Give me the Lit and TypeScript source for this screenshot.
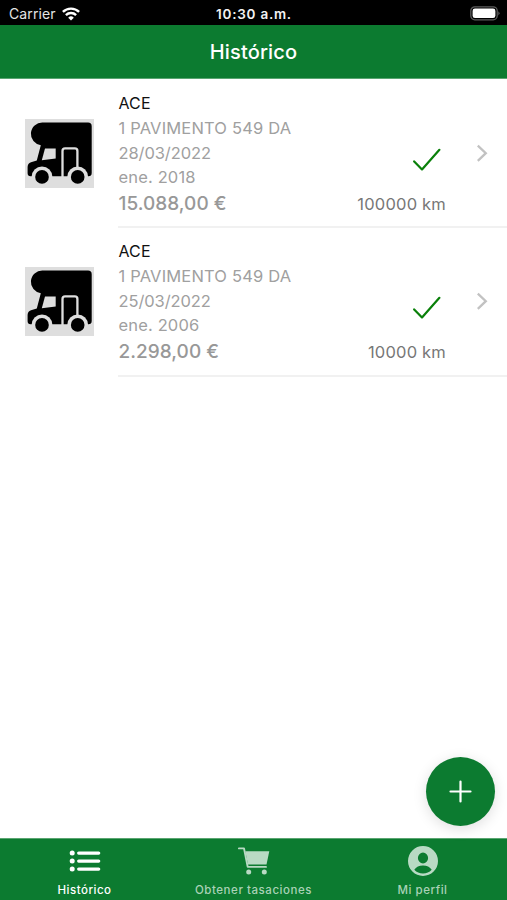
import { LitElement, html, css, svg } from "lit";
import { customElement, property } from "lit/decorators.js";

interface Valuation {
  brand: string;
  model: string;
  date: string;
  registered: string;
  price: string;
  distance: string;
}

const VALUATIONS: Valuation[] = [
  { brand: "ACE", model: "1 PAVIMENTO 549 DA", date: "28/03/2022", registered: "ene. 2018", price: "15.088,00 €", distance: "100000 km" },
  { brand: "ACE", model: "1 PAVIMENTO 549 DA", date: "25/03/2022", registered: "ene. 2006", price: "2.298,00 €", distance: "10000 km" },
];

@customElement("status-bar")
class StatusBar extends LitElement {
  static styles = css`
    :host { display: grid; grid-template-columns: 1fr auto 1fr; align-items: center; height: 25px; padding: 2px 7px 0 9px; box-sizing: border-box; background: #000; color: #e4e4e4; font-size: 14px; }
    .carrier { display: flex; align-items: center; gap: 6px; letter-spacing: 0.12px; }
    .time { color: #f2f2f2; font-size: 13.5px; font-weight: 600; letter-spacing: 0.75px; margin-right: 1px; }
    .battery { justify-self: end; display: block; }
    svg { display: block; }
  `;
  render() {
    return html`
      <div class="carrier">
        <span>Carrier</span>
        <svg width="18" height="14" viewBox="0 0 18 14" fill="none" stroke="#fff" stroke-width="2.4">
          <path d="M.9 4.9a11.6 11.6 0 0 1 16.2 0" />
          <path d="M3.9 8.1a7.3 7.3 0 0 1 10.2 0" />
          <path d="M9 13.6 6.2 10.7a4 4 0 0 1 5.6 0Z" fill="#fff" stroke="none" />
        </svg>
      </div>
      <div class="time">10:30 a.m.</div>
      <svg class="battery" width="30" height="15" viewBox="0 0 30 15">
        <rect x=".8" y=".8" width="26.4" height="13" rx="4" fill="none" stroke="#5c5c5c" stroke-width="1.3" />
        <rect x="2.6" y="2.5" width="22.8" height="9.6" rx="2.4" fill="#fff" />
        <path d="M28.3 5.2q2.6 2.1 0 4.2z" fill="#5c5c5c" />
      </svg>
    `;
  }
}

@customElement("camper-thumb")
class CamperThumb extends LitElement {
  static styles = css`
    :host { display: block; width: 69px; height: 69px; background: #dedede; }
    svg { display: block; }
    .gap { fill: #dedede; }
    .door { fill: none; stroke: #dedede; stroke-width: 2.3; }
  `;
  render() {
    return html`
      <svg width="69" height="69" viewBox="0 0 69 69">
        <path d="M17.5 3.5H63a3.7 3.7 0 0 1 3.7 3.7V54q0 3.3-3.3 3.3H5.6q-3 0-3-3V48q0-3.6 3.4-4.8L11.8 41.4 15.8 26.2A11.4 11.4 0 0 1 17.5 3.5Z" />
        <path class="gap" d="M20 29.4h10.7v10L16.8 41.3Z" />
        <path class="door" d="M37.5 58V32q0-2.6 2.6-2.6h9.7q2.6 0 2.6 2.6V49" />
        <circle class="gap" cx="17" cy="57.9" r="10.4" />
        <circle class="gap" cx="52.7" cy="57.9" r="10.4" />
        <circle cx="17" cy="57.9" r="6.8" />
        <circle cx="52.7" cy="57.9" r="6.8" />
      </svg>
    `;
  }
}

@customElement("valuation-row")
class ValuationRow extends LitElement {
  @property({ attribute: false }) item!: Valuation;
  static styles = css`
    :host { display: flex; align-items: center; gap: 24px; height: 148.3px; padding-left: 25px; }
    .body { flex: 1; height: 100%; box-sizing: border-box; display: flex; padding-top: 12px; box-shadow: 0 1px 0 #f1f1f1, inset 0 -1px 0 #f1f1f1; }
    .facts { flex: 1; padding-left: 0.5px; font-size: 16.5px; line-height: 24.6px; color: #a0a0a0; }
    .brand { color: #111; font-size: 16px; line-height: 25px; letter-spacing: 0.1px; }
    .model { letter-spacing: 0.17px; }
    .date { letter-spacing: -0.1px; }
    .registered { letter-spacing: 0.15px; }
    .price { font-size: 19px; line-height: 27px; color: #989898; font-weight: 450; letter-spacing: 0.03px; }
    .side { display: flex; flex-direction: column; align-items: flex-end; padding-top: 57px; }
    .check { display: block; margin-right: 5px; }
    .distance { margin-top: 20px; font-size: 16.5px; line-height: 24px; letter-spacing: 0.2px; color: #777; }
    .chevron { display: block; margin: 53px 19px 0 30px; }
  `;
  render() {
    const v = this.item;
    return html`
      <camper-thumb></camper-thumb>
      <div class="body">
        <div class="facts">
          <div class="brand">${v.brand}</div>
          <div class="model">${v.model}</div>
          <div class="date">${v.date}</div>
          <div class="registered">${v.registered}</div>
          <div class="price">${v.price}</div>
        </div>
        <div class="side">
          <svg class="check" width="28" height="24" viewBox="0 0 28 24" fill="none" stroke="#0a800a" stroke-width="2.2" stroke-linecap="round" stroke-linejoin="round">
            <path d="M1.2 13.4 9 21.4 26.4 1.8" />
          </svg>
          <div class="distance">${v.distance}</div>
        </div>
        <svg class="chevron" width="12" height="18" viewBox="0 0 12 18" fill="none" stroke="#c2c2c2" stroke-width="2.3">
          <path d="M1.8 1.6 9.8 9.2 1.8 16.8" />
        </svg>
      </div>
    `;
  }
}

const TABS = [
  {
    label: "Histórico",
    icon: svg`<g stroke="currentColor" stroke-width="3.3" stroke-linecap="round"><path d="M9.7 7.1h20M9.7 15.1h20M9.7 23.1h20"/></g><g fill="currentColor"><circle cx="3.2" cy="7.1" r="2.5"/><circle cx="3.2" cy="15.1" r="2.5"/><circle cx="3.2" cy="23.1" r="2.5"/></g>`,
  },
  {
    label: "Obtener tasaciones",
    icon: svg`<path d="M.9 2.4H6L9.7 20.9H28" fill="none" stroke="currentColor" stroke-width="1.9" stroke-linejoin="round" stroke-linecap="round"/><path d="M7.3 5.2H31.3L28.5 18.6H10Z" fill="currentColor"/><circle cx="10.7" cy="26.1" r="2.5" fill="currentColor"/><circle cx="26.3" cy="26.1" r="2.5" fill="currentColor"/>`,
  },
  {
    label: "Mi perfil",
    icon: svg`<path fill="currentColor" fill-rule="evenodd" d="M16 0a15 15 0 1 0 0 30 15 15 0 0 0 0-30Zm0 6.6a5.1 5.4 0 1 1 0 10.8 5.1 5.4 0 0 1 0-10.8Zm0 12.9c3.8 0 7 1.5 8.7 4.2a11.8 11.8 0 0 1-17.4 0c1.7-2.7 4.9-4.2 8.7-4.2Z"/>`,
  },
];

@customElement("tab-bar")
class TabBar extends LitElement {
  static styles = css`
    :host { display: grid; grid-template-columns: repeat(3, 1fr); height: 62px; background: #0c7b30; border-top: 1px solid #5aa571; box-sizing: border-box; }
    .tab { display: flex; flex-direction: column; align-items: center; padding-top: 7px; color: #a9d2b6; font-size: 11.5px; font-weight: 500; line-height: 16px; letter-spacing: 0.55px; }
    .active { color: #fff; font-weight: 550; letter-spacing: 0.5px; }
    svg { display: block; margin-bottom: 6px; color: #b9dac4; }
    .active svg { color: #fff; }
  `;
  render() {
    return TABS.map(
      (t, i) => html`<div class="tab ${i === 0 ? "active" : ""}">
        <svg width="32" height="30" viewBox="0 0 32 30">${t.icon}</svg>
        <span>${t.label}</span>
      </div>`
    );
  }
}

@customElement("app-root")
class AppRoot extends LitElement {
  static styles = css`
    :host { display: flex; flex-direction: column; position: relative; height: 100vh; background: #fff; overflow: hidden; font-family: Inter, "Liberation Sans", sans-serif; }
    .title { height: 54px; box-sizing: border-box; background: #0c7b30; border-bottom: 1px solid #5aa571; color: #fff; font-size: 20px; font-weight: 550; letter-spacing: 0.15px; line-height: 55px; text-align: center; }
    .list { flex: 1; }
    .fab { position: absolute; right: 12px; bottom: 73.6px; width: 69px; height: 69px; border-radius: 50%; background: #0c7b30; box-shadow: 0 3px 14px rgba(0, 0, 0, 0.13); display: grid; place-items: center; }
  `;
  render() {
    return html`
      <status-bar></status-bar>
      <div class="title">Histórico</div>
      <div class="list">${VALUATIONS.map((v) => html`<valuation-row .item=${v}></valuation-row>`)}</div>
      <tab-bar></tab-bar>
      <div class="fab">
        <svg width="23" height="23" viewBox="0 0 23 23" stroke="#fff" stroke-width="2.2" stroke-linecap="round"><path d="M11.5 1.5v20M1.5 11.5h20" /></svg>
      </div>
    `;
  }
}
